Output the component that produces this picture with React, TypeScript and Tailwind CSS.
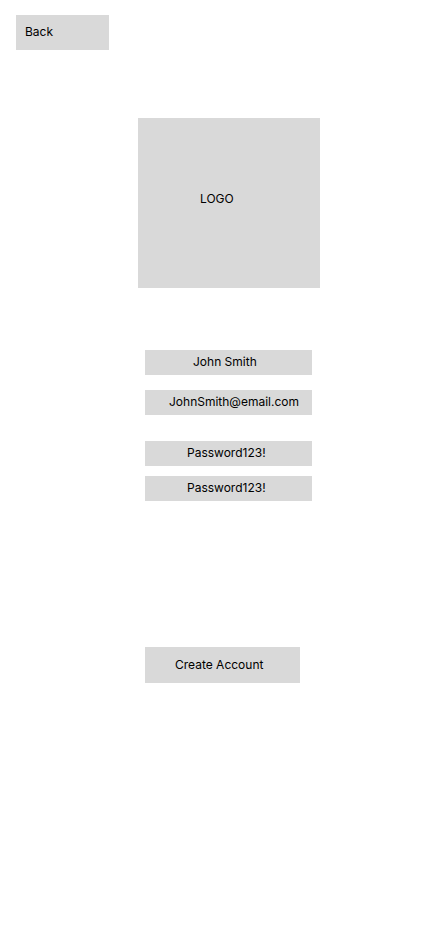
const inter = { fontFamily: "Inter, 'Noto Sans', sans-serif" };

const fieldBase =
  "flex h-[25px] w-[167px] items-center bg-[#d9d9d9] pb-[2px] text-[12px] text-black";

export default function App() {
  return (
    <div
      className="flex h-[932px] w-[430px] flex-col bg-white text-black"
      style={inter}
    >
      <button className="ml-[16px] mt-[15px] flex h-[35px] w-[93px] items-center bg-[#d9d9d9] pb-[2px] pl-[9px] text-[12px]">
        Back
      </button>

      <div className="ml-[138px] mt-[68px] flex h-[170px] w-[182px] items-center bg-[#d9d9d9] pb-[9px] pl-[62px] text-[12px]">
        LOGO
      </div>

      <div className="ml-[145px] mt-[62px] flex flex-col">
        <div className={fieldBase + " pl-[48px]"}>John Smith</div>
        <div className={fieldBase + " mt-[15px] pl-[24px]"}>
          JohnSmith@email.com
        </div>
        <div className={fieldBase + " mt-[26px] pl-[42px]"}>Password123!</div>
        <div className={fieldBase + " mt-[10px] pl-[42px]"}>Password123!</div>
      </div>

      <button className="ml-[145px] mt-[146px] flex h-[36px] w-[155px] items-center bg-[#d9d9d9] pl-[30px] text-[12px]">
        Create Account
      </button>
    </div>
  );
}
